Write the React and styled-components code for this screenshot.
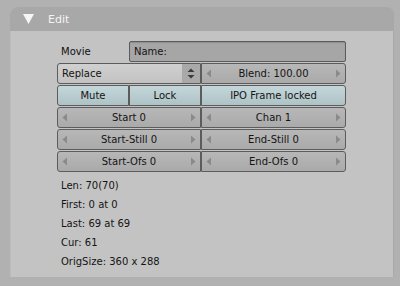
import React from "react";
import styled, { createGlobalStyle, css } from "styled-components";

const Global = createGlobalStyle`
  html, body {
    margin: 0;
    padding: 0;
    background: #b1b1b1;
    font-family: "DejaVu Sans", Verdana, sans-serif;
    font-size: 10px;
  }
`;

const Page = styled.div`
  width: 400px;
  height: 286px;
  padding: 7px 6px 9px 10px;
  box-sizing: border-box;
`;

const Panel = styled.div`
  height: 100%;
  display: flex;
  flex-direction: column;
  border-radius: 8px 8px 0 0;
  overflow: hidden;
  background: #c3c3c3;
  box-shadow: inset -1px 0 0 #a9a9a9, inset 1px 0 0 #bcbcbc;
`;

const Header = styled.div`
  height: 24px;
  flex: none;
  display: flex;
  align-items: center;
  gap: 14px;
  padding-left: 13px;
  background: #a8a8a8;
  color: #f4f4f4;
  font-size: 11px;
`;

const Body = styled.div`
  flex: 1;
  padding: 10px 0 0 47px;
`;

const Grid = styled.div`
  width: 289px;
  display: grid;
  grid-template-columns: 72px 72px 145px;
  grid-auto-rows: 21px;
  row-gap: 1px;
`;

const Label = styled.div`
  display: flex;
  align-items: center;
  padding-left: 4px;
  color: #111;
`;

const base = css`
  box-sizing: border-box;
  border: 1px solid #5c5c5c;
  display: flex;
  align-items: center;
  color: #141414;
  white-space: nowrap;
`;

const NameField = styled.div`
  ${base};
  grid-column: 2 / 4;
  padding-left: 4px;
  background: #a6a6a6;
  box-shadow: inset 0 1px 1px #8e8e8e;
  border-radius: 2px;
`;

const Menu = styled.div`
  ${base};
  grid-column: span 2;
  border-radius: 3px 0 0 3px;
  background: linear-gradient(#d0d0d0, #c2c2c2);
  padding-left: 4px;
  justify-content: space-between;
`;

const MenuArrows = styled.div`
  width: 18px;
  align-self: stretch;
  display: flex;
  align-items: center;
  justify-content: center;
  background: #a9a9a9;
`;

const Num = styled.div`
  ${base};
  grid-column: ${(p) => p.$span || "auto"};
  justify-content: space-between;
  padding: 0 4px;
  background: linear-gradient(#b7b7b7, #aaaaaa);
  border-radius: ${(p) => (p.$side === "left" ? "3px 0 0 3px" : "0 3px 3px 0")};
`;

const Toggle = styled.div`
  ${base};
  grid-column: ${(p) => p.$span || "auto"};
  justify-content: center;
  background: linear-gradient(#c4d6d9, #aec3c6);
  border-radius: ${(p) => p.$radius || "0"};
`;

const Info = styled.div`
  display: flex;
  flex-direction: column;
  margin-top: 4px;
  padding-left: 4px;
  color: #141414;
  line-height: 19px;
`;

const Arrow = ({ dir }) => (
  <svg width="6" height="9" viewBox="0 0 6 9">
    <path d={dir === "left" ? "M5 0.5 L0.5 4.5 L5 8.5 Z" : "M1 0.5 L5.5 4.5 L1 8.5 Z"} fill="#8a8a8a" />
  </svg>
);

const NumButton = ({ label, side, span }) => (
  <Num $side={side} $span={span}>
    <Arrow dir="left" />
    <span>{label}</span>
    <Arrow dir="right" />
  </Num>
);

export default function App() {
  return (
    <>
      <Global />
      <Page>
        <Panel>
          <Header>
            <svg width="11" height="10" viewBox="0 0 11 10">
              <path d="M0 0 H11 L5.5 10 Z" fill="#f6f6f6" />
            </svg>
            <span>Edit</span>
          </Header>
          <Body>
            <Grid>
              <Label>Movie</Label>
              <NameField>Name:</NameField>
              <Menu>
                <span>Replace</span>
                <MenuArrows>
                  <svg width="8" height="11" viewBox="0 0 8 11">
                    <path d="M4 0.5 L7.5 4 H0.5 Z M4 10.5 L7.5 7 H0.5 Z" fill="#3a3a3a" />
                  </svg>
                </MenuArrows>
              </Menu>
              <NumButton label="Blend: 100.00" side="right" />
              <Toggle $radius="3px 0 0 3px">Mute</Toggle>
              <Toggle>Lock</Toggle>
              <Toggle $radius="0 3px 3px 0">IPO Frame locked</Toggle>
              <NumButton label="Start 0" side="left" span="span 2" />
              <NumButton label="Chan 1" side="right" />
              <NumButton label="Start-Still 0" side="left" span="span 2" />
              <NumButton label="End-Still 0" side="right" />
              <NumButton label="Start-Ofs 0" side="left" span="span 2" />
              <NumButton label="End-Ofs 0" side="right" />
            </Grid>
            <Info>
              <span>Len: 70(70)</span>
              <span>First: 0 at 0</span>
              <span>Last: 69 at 69</span>
              <span>Cur: 61</span>
              <span>OrigSize: 360 x 288</span>
            </Info>
          </Body>
        </Panel>
      </Page>
    </>
  );
}
